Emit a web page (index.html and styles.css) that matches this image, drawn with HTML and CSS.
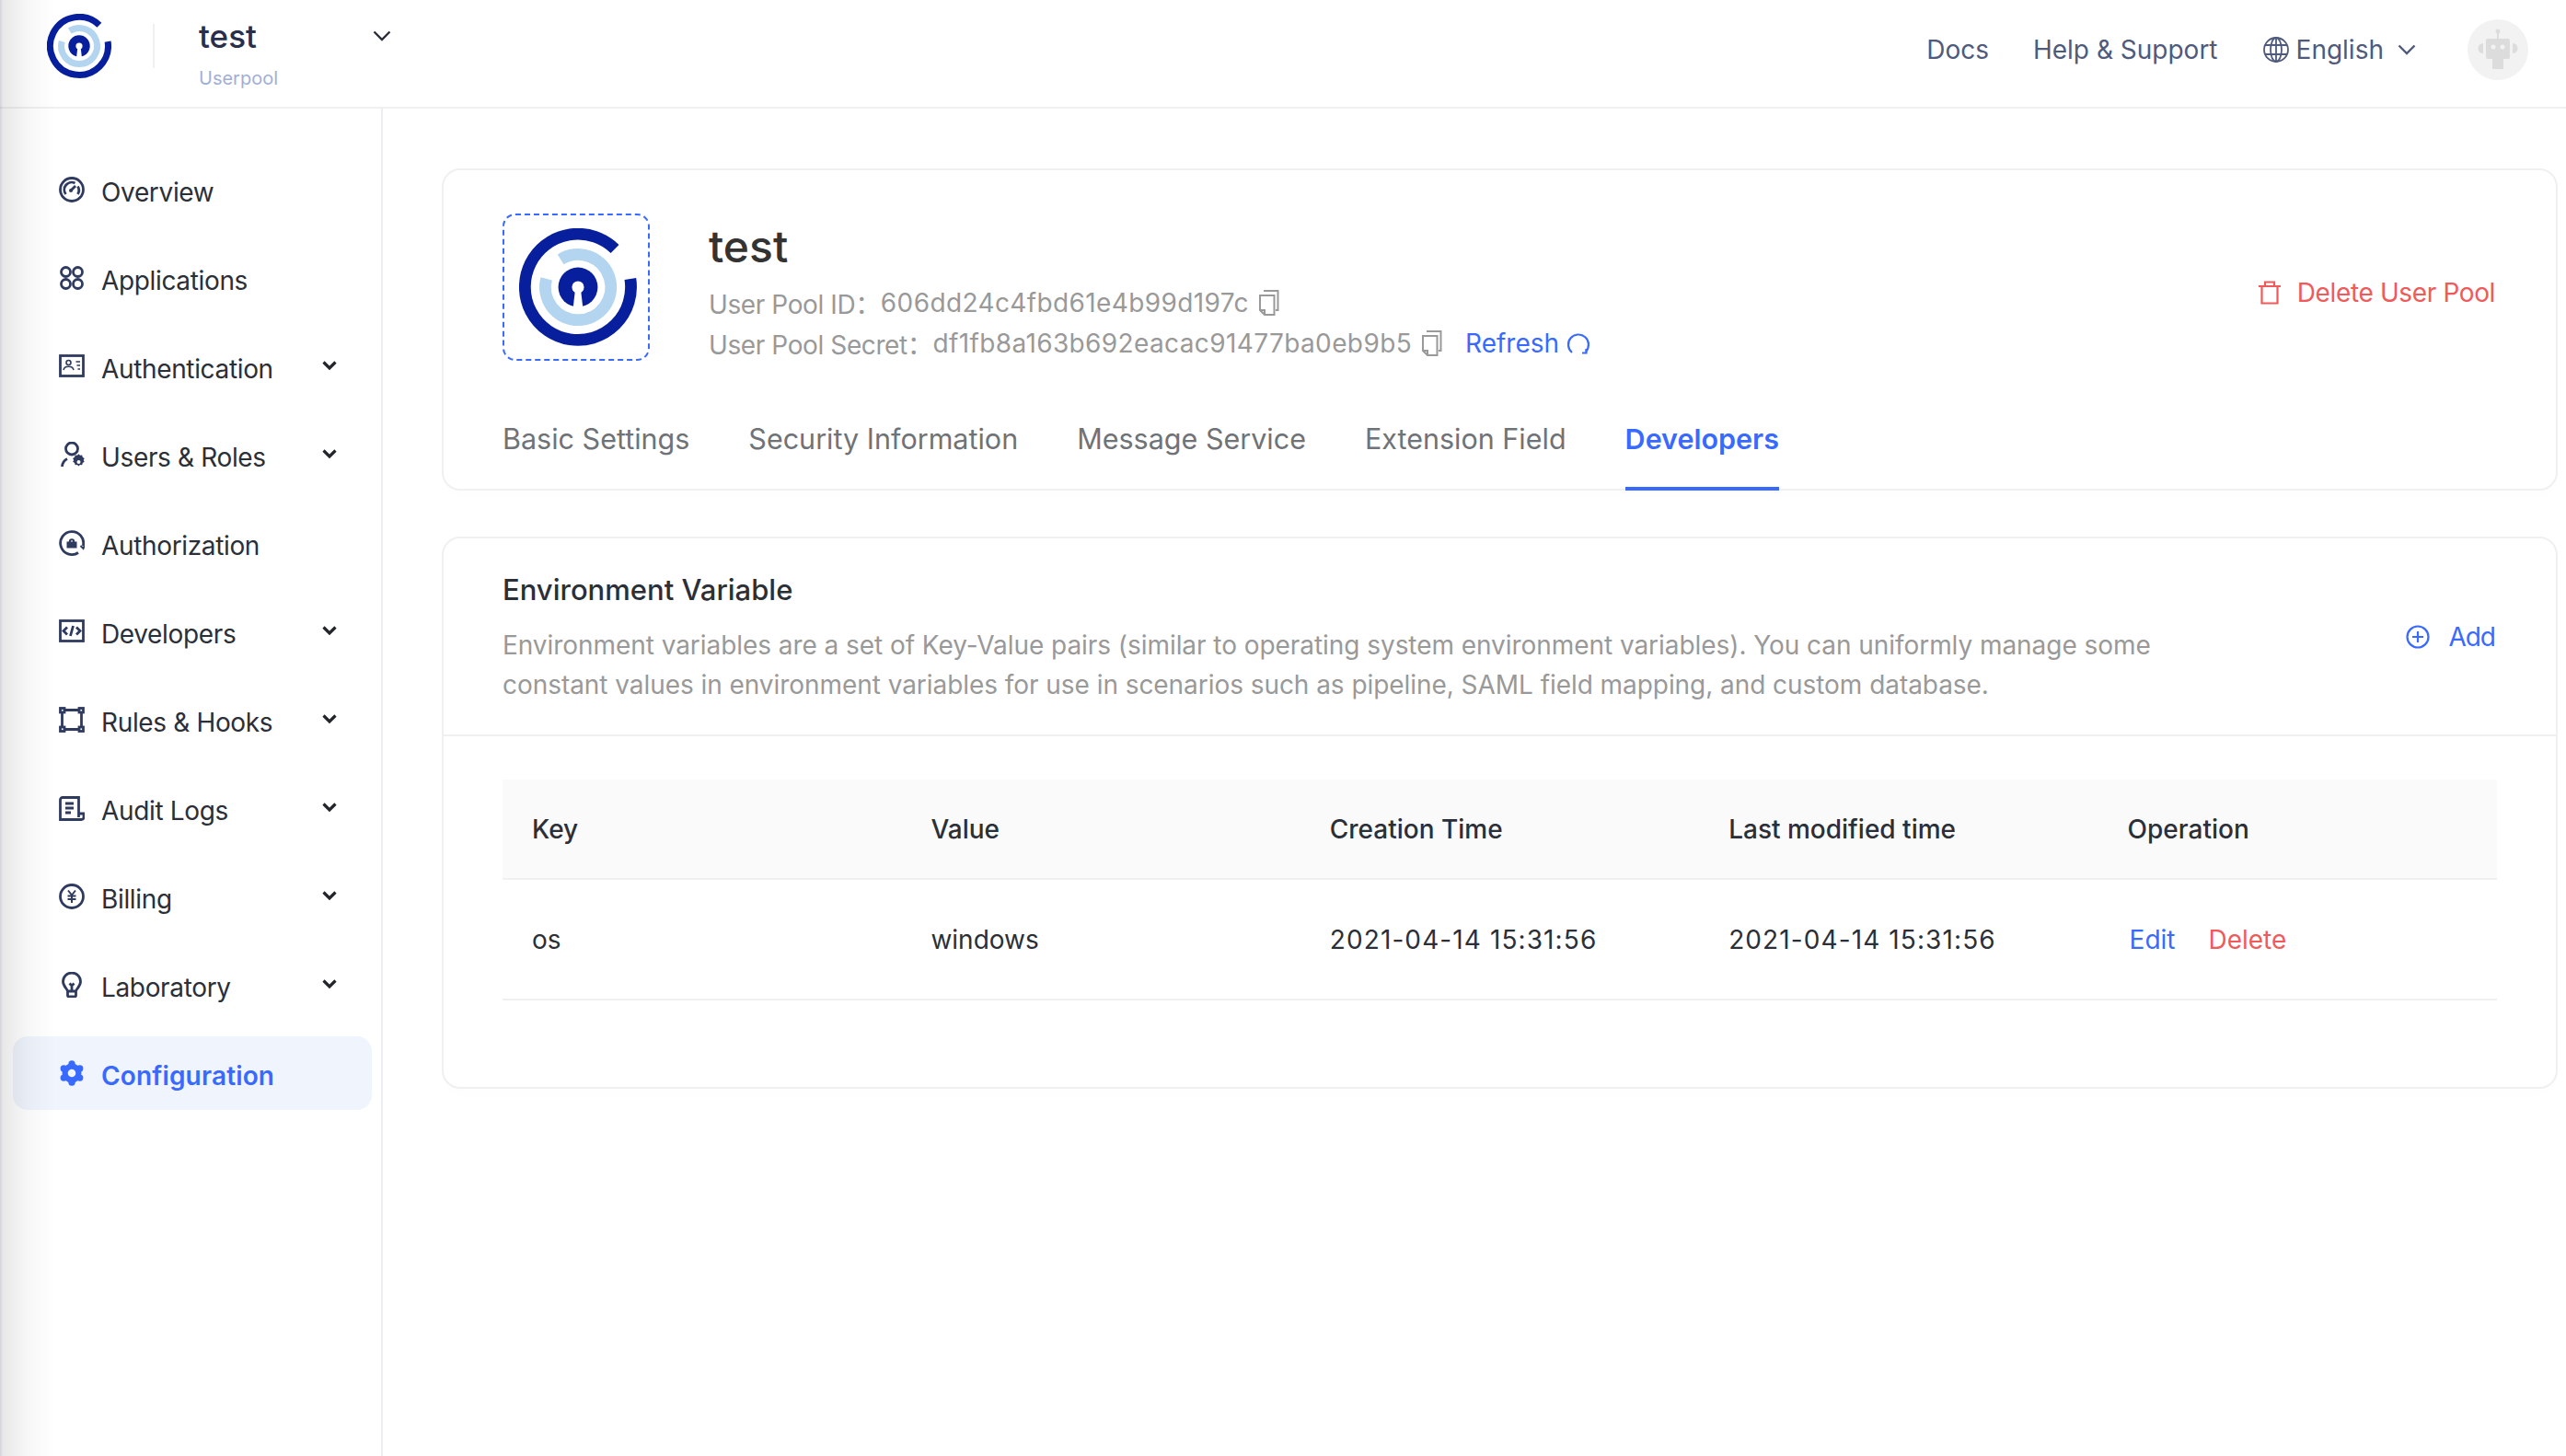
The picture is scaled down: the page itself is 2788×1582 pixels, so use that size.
FILE: index.html
```html
<!DOCTYPE html>
<html lang="en">
<head>
    <meta charset="UTF-8">
    <title>Authing - Developers</title>
    <link rel="stylesheet" href="styles.css">
</head>
<body>
    <svg class="defs" width="0" height="0">
        <symbol id="logo" viewBox="0 0 70 70">
            <path d="M56.9 12.3A31.5 31.5 0 1 0 66.1 30.1" fill="none" stroke="#071f9c" stroke-width="7"/>
            <path d="M24.7 18.5A19.5 19.5 0 1 1 16.2 30" fill="none" stroke="#b3d5f0" stroke-width="7"/>
            <circle cx="35" cy="35" r="11.7" fill="#071f9c"/>
            <circle cx="35" cy="35" r="3.6" fill="#fff"/>
            <path d="M33.4 36h3.2l1.4 12h-6z" fill="#fff"/>
        </symbol>
        <symbol id="copy" viewBox="0 0 24 28">
            <path d="M6 1h15.5v21H19M2 6h15.5v21H7l-5-5z M2 22h5v5" fill="none" stroke="#999" stroke-width="2"/>
        </symbol>
    </svg>

    <header class="topbar">
        <svg class="top-logo"><use href="#logo"/></svg>
        <span class="top-divider"></span>
        <div class="pool-switch">
            <div class="pool-switch-name">test</div>
            <div class="pool-switch-type">Userpool</div>
        </div>
        <svg class="pool-chevron" viewBox="0 0 20 12"><path d="M1.5 1.5 10 10l8.5-8.5" fill="none" stroke="#2b2f38" stroke-width="2.4"/></svg>
        <nav class="top-links">
            <a>Docs</a>
            <a>Help &amp; Support</a>
            <span class="lang">
                <svg class="globe" viewBox="0 0 30 30" fill="none" stroke="#4f5a7c" stroke-width="1.8">
                    <circle cx="15" cy="15" r="13"/><ellipse cx="15" cy="15" rx="6" ry="13"/><path d="M15 2v26M3 10h24M3 20h24"/>
                </svg>
                English
                <svg class="lang-chevron" viewBox="0 0 20 12"><path d="M1.5 1.5 10 10l8.5-8.5" fill="none" stroke="#4f5a7c" stroke-width="2.4"/></svg>
            </span>
            <span class="avatar">
                <svg viewBox="0 0 44 48" width="44" height="48" fill="#dcdcdc">
                    <circle cx="22" cy="4" r="2.5"/><rect x="21" y="5" width="2" height="7"/>
                    <rect x="9" y="12" width="26" height="22" rx="2"/><rect x="16" y="34" width="12" height="11"/>
                    <path d="M6 17v11a5 5 0 0 1 0-11zM38 17v11a5 5 0 0 0 0-11z"/>
                    <circle cx="17" cy="21" r="2.5" fill="#f2f2f2"/><circle cx="27" cy="21" r="2.5" fill="#f2f2f2"/>
                </svg>
            </span>
        </nav>
    </header>

    <div class="layout">
        <aside class="sidebar">
            <a class="nav-item">
                <svg class="nav-icon" viewBox="0 0 28 28"><circle cx="14" cy="14" r="12.5"/><path d="M7.5 19A8 8 0 0 1 17.5 7M20.5 10.500A8 8 0 0 1 20.500 19"/><path d="M13 15l5-5" /><circle class="solid" cx="13" cy="15" r="2"/></svg>
                <span>Overview</span>
            </a>
            <a class="nav-item">
                <svg class="nav-icon" viewBox="0 0 28 28"><circle cx="7.500" cy="7.500" r="5"/><circle cx="20.500" cy="7.500" r="5"/><circle cx="7.500" cy="20.500" r="5"/><circle cx="20.500" cy="20.500" r="5"/></svg>
                <span>Applications</span>
            </a>
            <a class="nav-item">
                <svg class="nav-icon" viewBox="0 0 28 28"><rect x="1.500" y="2.500" width="25" height="22"/><circle cx="10.500" cy="10" r="2.500" stroke-width="1.600"/><path d="M5 18c1-5 10-5 11 0M18.500 9h4.500M19.500 13h3.500M20.500 17h2.500" stroke-width="1.600"/></svg>
                <span>Authentication</span>
                <svg class="nav-chevron" viewBox="0 0 16 12"><path d="M1.500 2.500 8 9l6.500-6.500"/></svg>
            </a>
            <a class="nav-item">
                <svg class="nav-icon" viewBox="0 0 28 28"><circle cx="14" cy="7.500" r="6.500"/><path d="M3.500 27c.3-4 2.500-7 5.500-8.500"/><path class="solid" d="M21.500 15.500l1.600 1.700 2.300-.4.700 2.300 2 1.400-1 2 1 2-2 1.400-.7 2.300-2.300-.4-1.600 1.700-1.600-1.700-2.300.4-.7-2.300-2-1.400 1-2-1-2 2-1.400.7-2.300 2.300.4z" transform="translate(1 -1.500) scale(.95)"/><circle class="hole" cx="21.500" cy="22" r="2"/></svg>
                <span>Users &amp; Roles</span>
                <svg class="nav-chevron" viewBox="0 0 16 12"><path d="M1.500 2.500 8 9l6.500-6.500"/></svg>
            </a>
            <a class="nav-item">
                <svg class="nav-icon" viewBox="0 0 28 28"><path d="M26.300 17A12.500 12.500 0 1 0 21 24.500"/><path d="M23.500 17l3 3 1.500-3.500" stroke-width="2"/><path class="solid" d="M8.500 12.500h11v7h-11zM10.800 12.500a3.200 3.200 0 0 1 6.400 0h-2a1.200 1.200 0 0 0-2.400 0z"/></svg>
                <span>Authorization</span>
            </a>
            <a class="nav-item">
                <svg class="nav-icon" viewBox="0 0 28 28"><rect x="1.500" y="2.500" width="25" height="22"/><path d="M9 9.500 5 13.500l4 4M19 9.500l4 4-4 4M15.500 8l-3 11"/></svg>
                <span>Developers</span>
                <svg class="nav-chevron" viewBox="0 0 16 12"><path d="M1.500 2.500 8 9l6.500-6.500"/></svg>
            </a>
            <a class="nav-item">
                <svg class="nav-icon" viewBox="0 0 28 28"><path d="M6 3.500h16M6 24.500h16M3.500 6v16M24.500 6v16"/><rect x="1.500" y="1.500" width="4.500" height="4.500"/><rect x="22" y="1.500" width="4.500" height="4.500"/><rect x="1.500" y="22" width="4.500" height="4.500"/><rect x="22" y="22" width="4.500" height="4.500"/></svg>
                <span>Rules &amp; Hooks</span>
                <svg class="nav-chevron" viewBox="0 0 16 12"><path d="M1.500 2.500 8 9l6.500-6.500"/></svg>
            </a>
            <a class="nav-item">
                <svg class="nav-icon" viewBox="0 0 28 28"><path d="M21.500 20V2.500H4A2.500 2.500 0 0 0 1.500 5v21.500h23A2.500 2.500 0 0 0 27 24v-4h-5.500v4"/><path d="M7 9h9M7 14h9M7 19h6"/></svg>
                <span>Audit Logs</span>
                <svg class="nav-chevron" viewBox="0 0 16 12"><path d="M1.500 2.500 8 9l6.500-6.500"/></svg>
            </a>
            <a class="nav-item">
                <svg class="nav-icon" viewBox="0 0 28 28"><circle cx="14" cy="14" r="12.500"/><path d="M10 7.500l4 5 4-5M9.500 13.500h9M9.500 17h9M14 12.500V21" stroke-width="2"/></svg>
                <span>Billing</span>
                <svg class="nav-chevron" viewBox="0 0 16 12"><path d="M1.500 2.500 8 9l6.500-6.500"/></svg>
            </a>
            <a class="nav-item">
                <svg class="nav-icon" viewBox="0 0 28 28"><path d="M9.500 21c0-2.500-5-5-5-10.500a9.500 9.500 0 0 1 19 0C23.500 16 18.500 18.500 18.500 21zM9.500 21v4.500c0 1 .5 1.500 1.500 1.500h6c1 0 1.500-.5 1.500-1.500V21M14 14v7M11.500 12.500 14 15l2.500-2.500" /></svg>
                <span>Laboratory</span>
                <svg class="nav-chevron" viewBox="0 0 16 12"><path d="M1.500 2.500 8 9l6.500-6.500"/></svg>
            </a>
            <a class="nav-item active">
                <svg class="nav-icon gear" viewBox="0 0 28 28">
                    <circle cx="14" cy="14" r="10.500"/>
                    <circle cx="14" cy="3.800" r="3.600"/><circle cx="22.800" cy="8.900" r="3.600"/><circle cx="22.800" cy="19.100" r="3.600"/>
                    <circle cx="14" cy="24.200" r="3.600"/><circle cx="5.200" cy="19.100" r="3.600"/><circle cx="5.200" cy="8.900" r="3.600"/>
                    <circle class="gear-hole" cx="14" cy="14" r="4.300"/>
                </svg>
                <span>Configuration</span>
            </a>
        </aside>

        <main class="content">
            <section class="card pool-card">
                <div class="pool-head">
                    <div class="logo-box"><svg class="pool-logo"><use href="#logo"/></svg></div>
                    <div class="pool-info">
                        <h1>test</h1>
                        <div class="pool-meta">User Pool ID：<span class="mono">606dd24c4fbd61e4b99d197c</span><svg class="copy-icon"><use href="#copy"/></svg></div>
                        <div class="pool-meta">User Pool Secret：<span class="mono">df1fb8a163b692eacac91477ba0eb9b5</span><svg class="copy-icon"><use href="#copy"/></svg>
                            <a class="refresh">Refresh
                                <svg viewBox="0 0 26 26" width="26" height="26" fill="none" stroke="#396aff" stroke-width="2.200"><path d="M6 23A11 11 0 1 1 21 22"/><path d="M17 23.500h4.500V19"/></svg>
                            </a>
                        </div>
                    </div>
                    <a class="delete-pool">
                        <svg viewBox="0 0 24 26" width="24" height="26" fill="none" stroke="#f05a5a" stroke-width="2.200"><path d="M0 6h24M3.500 6v18.500h17V6M7 6V1.500h10V6"/></svg>
                        Delete User Pool
                    </a>
                </div>
                <div class="tabs">
                    <a class="tab">Basic Settings</a>
                    <a class="tab">Security Information</a>
                    <a class="tab">Message Service</a>
                    <a class="tab">Extension Field</a>
                    <a class="tab active">Developers</a>
                </div>
            </section>

            <section class="card env-card">
                <div class="env-head">
                    <div class="env-text">
                        <h2>Environment Variable</h2>
                        <p>Environment variables are a set of Key-Value pairs (similar to operating system environment variables). You can uniformly manage some constant values in environment variables for use in scenarios such as pipeline, SAML field mapping, and custom database.</p>
                    </div>
                    <a class="add-btn">
                        <svg viewBox="0 0 26 26" width="26" height="26" fill="none" stroke="#396aff" stroke-width="2.200"><circle cx="13" cy="13" r="11.500"/><path d="M13 7v12M7 13h12"/></svg>
                        Add
                    </a>
                </div>
                <div class="env-body">
                    <table class="env-table">
                        <thead>
                            <tr><th>Key</th><th>Value</th><th>Creation Time</th><th>Last modified time</th><th>Operation</th></tr>
                        </thead>
                        <tbody>
                            <tr>
                                <td>os</td>
                                <td>windows</td>
                                <td class="date">2021-04-14 15:31:56</td>
                                <td class="date">2021-04-14 15:31:56</td>
                                <td><a class="op-edit">Edit</a><a class="op-delete">Delete</a></td>
                            </tr>
                        </tbody>
                    </table>
                </div>
            </section>
        </main>
    </div>

    <div class="edge-shade"></div>
</body>
</html>
```
FILE: styles.css
```css
/* Global */
* {
    box-sizing: border-box;
}

html, body {
    height: 100%;
}

body {
    margin: 0;
    overflow: hidden;
    background: #fff;
    color: #2b2f38;
    font-family: Inter, "Noto Sans CJK SC", sans-serif;
    font-size: 28px;
}

.defs {
    position: absolute;
}

/* Top bar */
.topbar {
    display: flex;
    height: 118px;
    padding: 0 41px 0 51px;
    border-bottom: 2px solid #f0f0f0;
}

.top-logo {
    width: 70px;
    height: 70px;
    margin-top: 15px;
}

.top-divider {
    width: 2px;
    height: 48px;
    margin: 26px 48px 0 45px;
    background: #f0f0f0;
}

.pool-switch {
    width: 189px;
    padding-top: 19px;
}

.pool-switch-name {
    font-size: 35px;
    font-weight: 500;
    line-height: 40px;
    color: #282f4d;
}

.pool-switch-type {
    margin-top: 11px;
    font-size: 20px;
    line-height: 30px;
    color: #9fafd8;
}

.pool-chevron {
    width: 20px;
    height: 12px;
    margin-top: 33px;
}

.top-links {
    display: flex;
    align-items: center;
    gap: 48px;
    height: 108px;
    margin-left: auto;
    color: #4f5a7c;
}

.lang {
    display: flex;
    align-items: center;
}

.globe {
    width: 30px;
    height: 30px;
    margin-right: 7px;
}

.lang-chevron {
    width: 20px;
    height: 12px;
    margin-left: 15px;
}

.avatar {
    display: flex;
    align-items: center;
    justify-content: center;
    width: 66px;
    height: 66px;
    margin-left: 8px;
    border-radius: 50%;
    background: #f2f2f2;
}

/* Layout */
.layout {
    display: flex;
    height: calc(100% - 118px);
}

.sidebar {
    display: flex;
    flex-direction: column;
    gap: 16px;
    width: 416px;
    padding: 48px 10px 0 14px;
    border-right: 2px solid #eeeef2;
}

.nav-item {
    display: flex;
    align-items: center;
    height: 80px;
    padding: 0 38px 0 50px;
    border-radius: 16px;
    letter-spacing: -0.35px;
}

.nav-item span {
    padding-top: 5px;
}

.nav-item.active {
    background: #f0f4fd;
    color: #396aff;
    font-weight: 600;
    letter-spacing: 0.15px;
}

.nav-icon {
    flex: none;
    width: 28px;
    height: 28px;
    margin: 0 18px 0 0;
    fill: none;
    stroke: #2f3a5f;
    stroke-width: 2.800;
}

.nav-icon .solid {
    fill: #2f3a5f;
    stroke: none;
}

.nav-icon .hole {
    fill: #fff;
    stroke: none;
}

.nav-icon.gear {
    fill: #396aff;
    stroke: none;
}

.nav-icon .gear-hole {
    fill: #f0f4fd;
}

.nav-chevron {
    width: 16px;
    height: 12px;
    margin: -2px 0 0 auto;
    fill: none;
    stroke: #22252c;
    stroke-width: 3.200;
}

/* Cards */
.content {
    flex: 1;
    padding: 65px 9px 0 64px;
}

.card {
    border: 2px solid #f0f0f0;
    border-radius: 20px;
    background: #fff;
    box-shadow: 0 8px 16px rgba(0, 0, 0, 0.008);
}

.pool-card {
    padding: 47px 66px 0 64px;
}

.pool-head {
    display: flex;
}

.logo-box {
    display: flex;
    align-items: center;
    justify-content: center;
    width: 160px;
    height: 160px;
    padding-left: 4px;
    border: 2px dashed #396aff;
    border-radius: 14px;
}

.pool-logo {
    width: 128px;
    height: 128px;
}

.pool-info {
    margin-left: 64px;
}

.pool-info h1 {
    margin: 8px 0 11px;
    font-size: 48px;
    font-weight: 500;
    line-height: 56px;
    color: #333;
}

.pool-meta {
    display: flex;
    align-items: center;
    height: 44px;
    color: #999;
    letter-spacing: -0.4px;
}

.mono {
    letter-spacing: 0.38px;
}

.copy-icon {
    width: 24px;
    height: 28px;
    margin-left: 10px;
}

.refresh {
    display: flex;
    align-items: center;
    gap: 8px;
    margin-left: 24px;
    color: #396aff;
    letter-spacing: 0;
}

.delete-pool {
    display: flex;
    align-items: center;
    gap: 18px;
    height: 44px;
    margin: 64px 0 0 auto;
    color: #f05a5a;
    letter-spacing: -0.37px;
}

/* Tabs */
.tabs {
    display: flex;
    gap: 64px;
    margin: 36px 0 -2px;
}

.tab {
    padding: 24px 0 30px;
    border-bottom: 4px solid transparent;
    font-size: 30.5px;
    line-height: 44px;
    color: #6f7378;
}

.tab.active {
    border-bottom-color: #396aff;
    color: #396aff;
    font-weight: 600;
}

/* Environment variable card */
.env-card {
    height: 600px;
    margin-top: 50px;
}

.env-head {
    display: flex;
    align-items: center;
    padding: 36px 66px 32px 64px;
    border-bottom: 2px solid #f0f0f0;
}

.env-text {
    width: 1800px;
}

.env-text h2 {
    margin: 0 0 19px;
    font-size: 31px;
    font-weight: 500;
    line-height: 40px;
}

.env-text p {
    margin: 0;
    line-height: 43px;
    color: #999;
    letter-spacing: -0.055px;
}

.add-btn {
    display: flex;
    align-items: center;
    gap: 20px;
    margin: 0 0 4px auto;
    color: #396aff;
    letter-spacing: -1px;
}

.env-body {
    padding: 47px 64px 0;
}

.env-table {
    width: 100%;
    border-collapse: collapse;
    table-layout: fixed;
}

.env-table th {
    height: 108px;
    padding: 0 32px;
    background: #fafafa;
    border-bottom: 2px solid #f0f0f0;
    font-weight: 500;
    text-align: left;
}

.env-table td {
    height: 131px;
    padding: 0 32px;
    border-bottom: 2px solid #f0f0f0;
}

.env-table .date {
    letter-spacing: 1.1px;
}

.op-edit {
    margin: 0 36px 0 2px;
    color: #396aff;
}

.op-delete {
    color: #f05a5a;
}

/* Soft shade along the left window edge */
.edge-shade {
    position: fixed;
    top: 0;
    bottom: 0;
    left: 0;
    width: 60px;
    background: linear-gradient(to right, rgba(0, 0, 40, 0.18) 0, rgba(0, 0, 0, 0.09) 3px, rgba(0, 0, 0, 0.03) 30px, transparent 60px);
    pointer-events: none;
}
```
